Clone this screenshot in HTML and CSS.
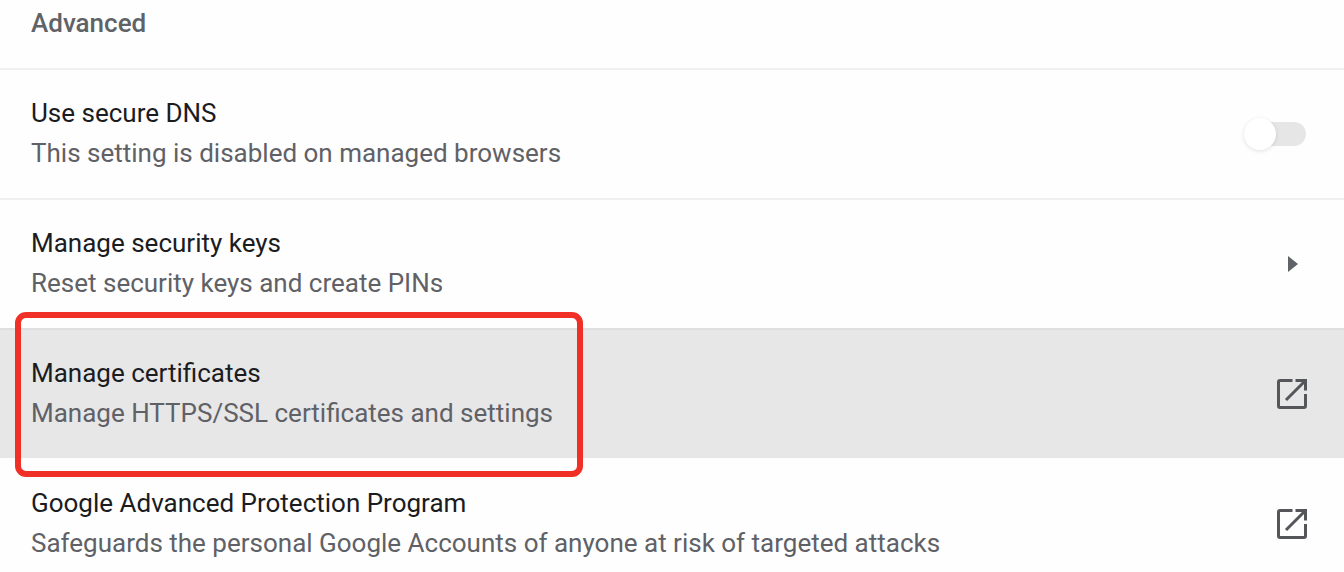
FILE: index.html
```html
<!DOCTYPE html>
<html lang="en">
<head>
  <meta charset="utf-8">
  <meta name="viewport" content="width=device-width, initial-scale=1">
  <title>Security</title>
  <link rel="stylesheet" href="styles.css">
</head>
<body>
  <main class="settings">
    <h2 class="section-title">Advanced</h2>

    <div class="row">
      <label class="text" for="secure-dns">
        <span class="label">Use secure DNS</span>
        <span class="sub-label">This setting is disabled on managed browsers</span>
      </label>
      <input class="toggle" type="checkbox" id="secure-dns" disabled>
    </div>

    <button class="row" type="button">
      <span class="text">
        <span class="label">Manage security keys</span>
        <span class="sub-label">Reset security keys and create PINs</span>
      </span>
      <svg class="icon" viewBox="0 0 40 40" aria-hidden="true"><path d="M16 12l10 8-10 8z"/></svg>
    </button>

    <a class="row row-active" href="#certificates">
      <span class="text">
        <span class="label">Manage certificates</span>
        <span class="sub-label">Manage HTTPS/SSL certificates and settings</span>
      </span>
      <svg class="icon" viewBox="0 0 40 40" aria-hidden="true"><path class="stroke" d="M20.500 6.500H8q-1.500 0-1.500 1.500v24q0 1.500 1.500 1.500h24q1.500 0 1.500-1.500V20M23.500 6.500h10V16.500M33 7L14 26"/></svg>
      <span class="highlight"></span>
    </a>

    <a class="row row-plain" href="#advanced-protection">
      <span class="text">
        <span class="label">Google Advanced Protection Program</span>
        <span class="sub-label">Safeguards the personal Google Accounts of anyone at risk of targeted attacks</span>
      </span>
      <svg class="icon" viewBox="0 0 40 40" aria-hidden="true"><path class="stroke" d="M20.500 6.500H8q-1.500 0-1.500 1.500v24q0 1.500 1.500 1.500h24q1.500 0 1.500-1.500V20M23.500 6.500h10V16.500M33 7L14 26"/></svg>
    </a>
  </main>
</body>
</html>
```
FILE: styles.css
```css
* {
  box-sizing: border-box;
}

body {
  margin: 0;
  background: #fefefe;
  color: #1b1c1f;
  font-family: Roboto, "Liberation Sans", sans-serif;
  font-size: 26px;
  line-height: 40px;
}

.settings {
  display: flex;
  flex-direction: column;
}

.section-title {
  margin: 0;
  padding: 3px 31px 25px;
  color: #5f6368;
  font-size: 26px;
  font-weight: 500;
}

.row {
  position: relative;
  display: flex;
  align-items: center;
  justify-content: space-between;
  gap: 32px;
  width: 100%;
  margin: 0;
  padding: 23px 32px 23px 31px;
  border: 0;
  border-top: 2px solid #f0f0f0;
  background: transparent;
  color: inherit;
  font: inherit;
  text-align: left;
  text-decoration: none;
}

.row-active {
  border-top-color: #dedfe0;
  background: #e7e7e8;
}

.row-plain {
  border-top-color: transparent;
}

.text {
  display: flex;
  flex-direction: column;
  padding-bottom: 2px;
}

.sub-label {
  color: #5f6166;
}

.icon {
  flex: none;
  width: 40px;
  height: 40px;
  fill: #5f6368;
}

.stroke {
  fill: none;
  stroke: #55565a;
  stroke-width: 3;
}

.toggle {
  appearance: none;
  position: relative;
  flex: none;
  width: 60px;
  height: 24px;
  margin: 0 6px;
  border-radius: 12px;
  background: #e6e6e6;
}

.toggle::before {
  content: "";
  position: absolute;
  top: -4px;
  left: -2px;
  width: 32px;
  height: 32px;
  border-radius: 50%;
  background: #fff;
  box-shadow: 0 1px 4px rgba(0, 0, 0, 0.12);
}

.highlight {
  position: absolute;
  z-index: 1;
  top: -18px;
  left: 15px;
  width: 568px;
  height: 165px;
  border: 6px solid #f03026;
  border-radius: 11px;
  pointer-events: none;
}
```
